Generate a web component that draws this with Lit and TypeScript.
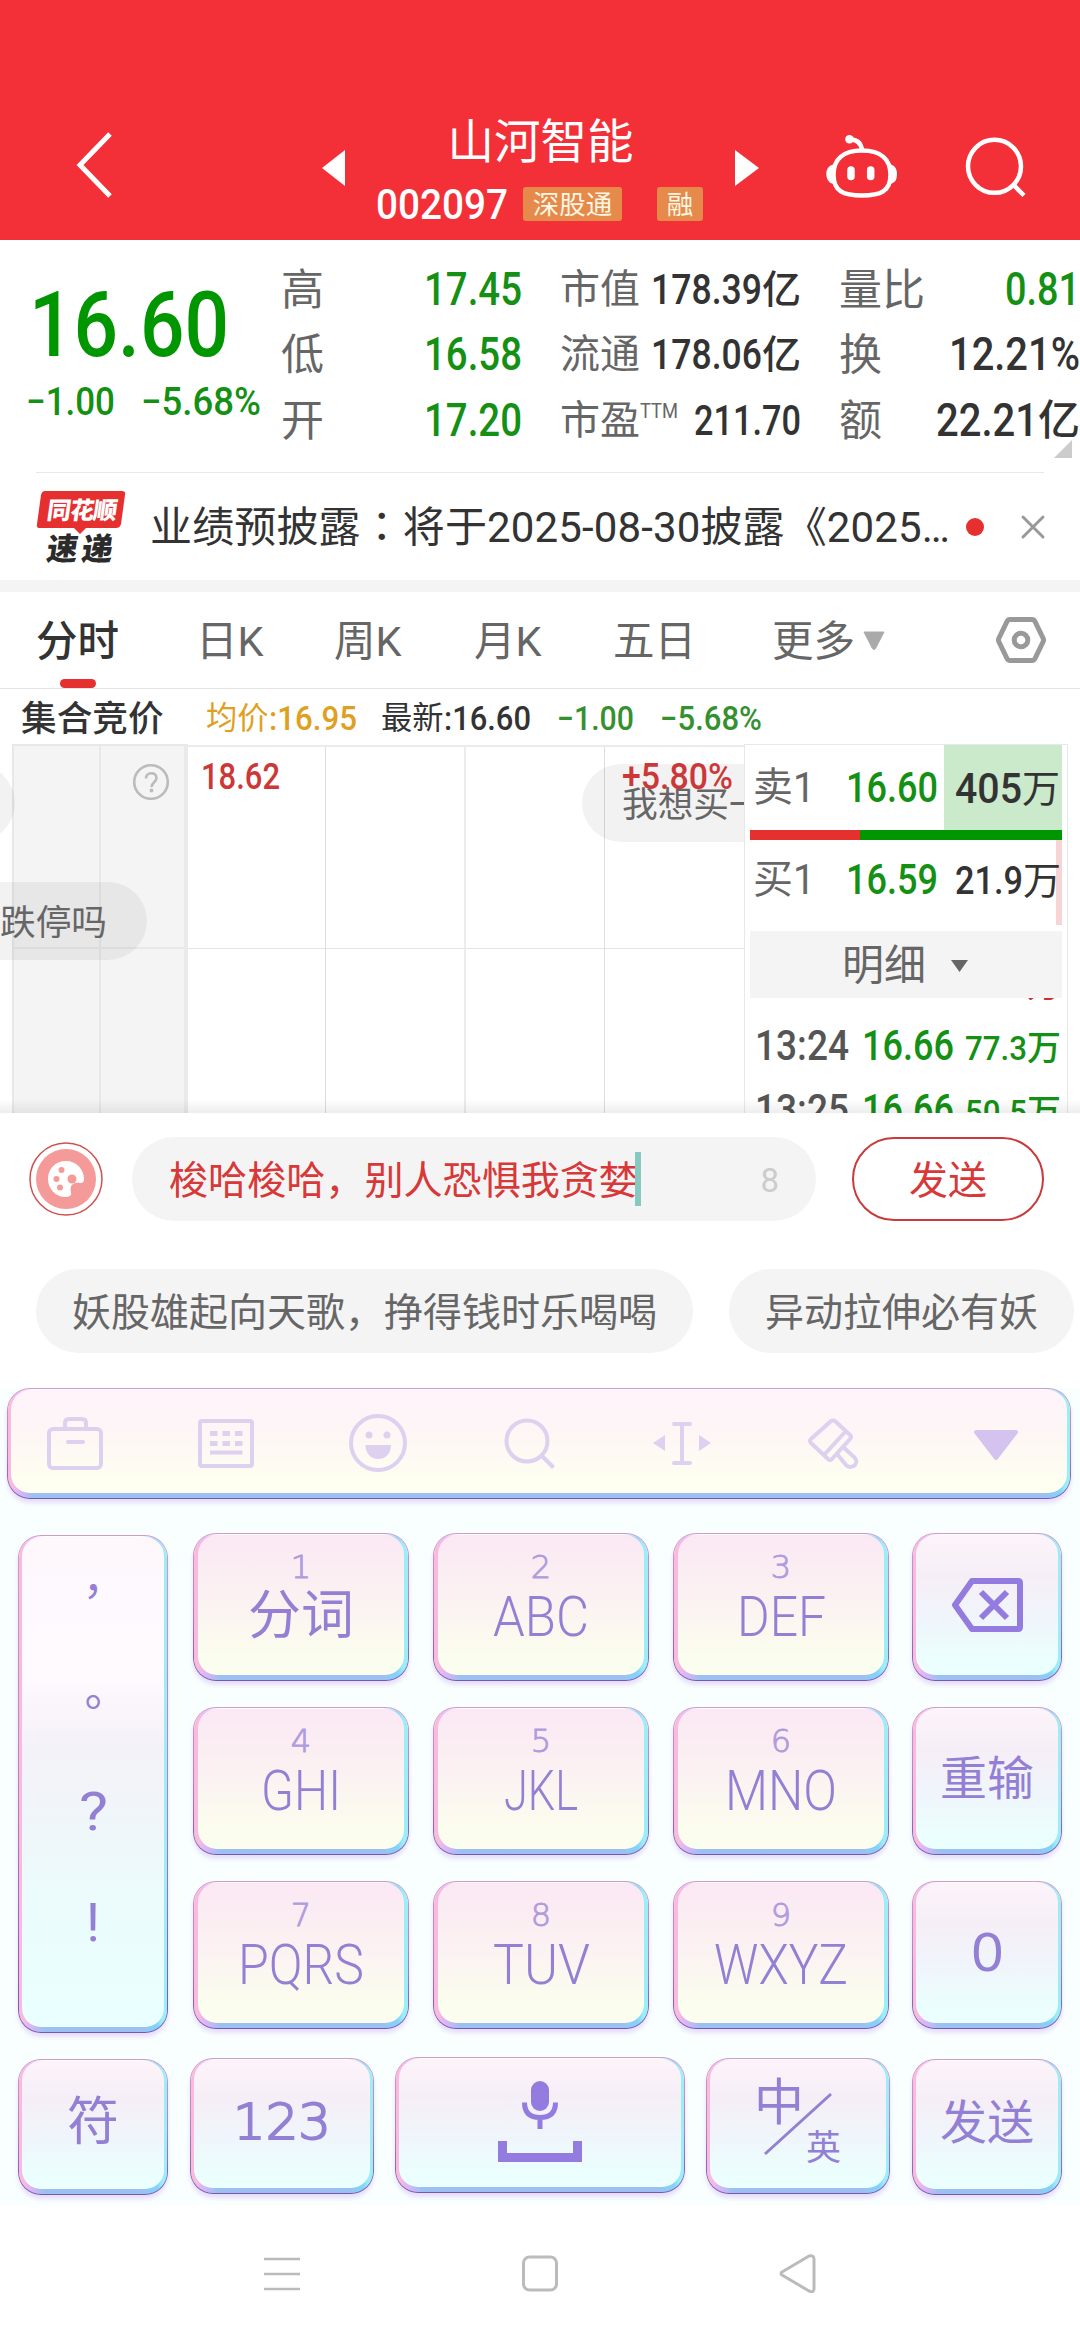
import { LitElement, html, css, nothing } from "lit";
import { customElement, property } from "lit/decorators.js";

/** One line of text set to an exact advance width, condensed or widened as needed. */
@customElement("fit-text")
export class FitText extends LitElement {
  static styles = css`
    :host { display: inline-block; white-space: nowrap; flex: none; }
    .line { display: inline-block; transform-origin: 0 50%; }
  `;
  @property() text = "";
  @property({ type: Number }) w = 0;
  render() {
    return html`<span class="line">${this.text}</span>`;
  }
  updated() {
    const line = this.renderRoot.querySelector(".line") as HTMLElement;
    line.style.transform = "none";
    const natural = line.getBoundingClientRect().width || this.w;
    this.style.width = `${this.w}px`;
    line.style.marginRight = `${this.w - natural}px`;
    line.style.transform = `scaleX(${this.w / natural})`;
  }
}

const fit = (text: string, w: number, cls = "") =>
  html`<fit-text class="num ${cls}" .text=${text} .w=${w}></fit-text>`;

@customElement("quote-header")
export class QuoteHeader extends LitElement {
  static styles = css`
    :host { display: block; height: 240px; background: #f33038; color: #fff; }
    .bar { display: flex; height: 240px; box-sizing: border-box; padding-top: 110px; }
    .back { width: 322px; height: 130px; flex: none; }
    .arrow { width: 24px; height: 36px; margin-top: 40px; flex: none; }
    .mid { width: 389px; flex: none; display: flex; flex-direction: column; align-items: center; }
    .name { font-size: 46.5px; line-height: 64px; height: 74px; }
    .sub { display: flex; align-items: center; height: 40px; align-self: flex-start; padding-left: 30px; }
    .code { font-size: 42px; line-height: 42px; font-weight: 500; padding-top: 2px; }
    .tag { background: #e58a4b; color: #fff6e2; height: 34px; line-height: 36px; font-size: 26.5px; width: 99px; text-align: center; border-radius: 3px; margin-left: 15px; }
    .one { width: 46px; margin-left: 35px; }
    .icon { height: 130px; flex: none; }
  `;
  render() {
    return html`<div class="bar">
      <svg class="back" viewBox="0 0 322 130"><path d="M110 24 80 55l30 31" fill="none" stroke="#fff" stroke-width="5"/></svg>
      <svg class="arrow" viewBox="0 0 24 36"><path d="M23 0v36L0 18z" fill="#fff"/></svg>
      <div class="mid">
        <div class="name">山河智能</div>
        <div class="sub">${fit("002097", 132, "code")}<span class="tag">深股通</span><span class="tag one">融</span></div>
      </div>
      <svg class="arrow" viewBox="0 0 24 36"><path d="M0 0v36l24-18z" fill="#fff"/></svg>
      <svg class="icon" width="321" viewBox="759 110 321 130" fill="none" stroke="#fff" stroke-width="4.500">
        <path d="M850 139.500c6 0 11 3 12 10.500"/>
        <circle cx="849.500" cy="139.300" r="4.300" fill="#fff" stroke="none"/>
        <path d="M862 150.500c-19 0-28.500 9-28.500 24 0 17 10 21 28.500 21s28.500-4 28.500-21c0-15-9.500-24-28.500-24z"/>
        <path d="M833 165.500c-8 1-8 16 0 17.500zM891 165.500c7 1 7 16 0 17.500z" fill="#fff" stroke="#fff" stroke-width="1.500"/>
        <path d="M851 170v6.500M870.700 170v6.500" stroke-width="7.500" stroke-linecap="round"/>
        <circle cx="994.500" cy="166.300" r="26.500"/>
        <path d="M1013 184.500l11 11"/>
      </svg>
    </div>`;
  }
}

@customElement("quote-stats")
export class QuoteStats extends LitElement {
  static styles = css`
    :host { display: block; height: 232px; }
    .wrap { display: flex; height: 232px; position: relative; }
    .price { width: 281px; flex: none; color: #009600; box-sizing: border-box; padding: 33px 0 0 29px; }
    .big { font-size: 91px; line-height: 104px; height: 104px; font-weight: 500; display: block; }
    .chg { font-size: 39px; line-height: 48px; font-weight: 500; color: #149014; display: flex; gap: 26px; margin: 1px 0 0 -3px; }
    .col { width: 241px; margin-right: 38px; padding-top: 17px; flex: none; }
    .col:last-of-type { margin-right: 0; }
    .row { height: 65.5px; display: flex; justify-content: space-between; align-items: center; }
    .lab { font-size: 43px; line-height: 50px; color: #666; }
    .col.m .lab { font-size: 40px; display: flex; }
    .tm { font-size: 20px; line-height: 30px; color: #666; }
    .val { display: flex; align-items: center; color: #333; font-weight: 500; line-height: 50px; font-size: 45.5px; }
    .col.m .val { font-size: 42px; }
    .unit { font-size: 42px; line-height: 50px; font-weight: 500; }
    .col.m .unit { font-size: 39px; }
    .val.g { color: #149014; }
    .corner { position: absolute; left: 1054px; top: 200px; width: 18px; height: 18px; }
  `;
  render() {
    const col = (cls: string, rows: [string, string, number, string, string][]) => html`<div class="col ${cls}">
      ${rows.map(([l, v, w, u, c]) => html`<div class="row">
        <span class="lab">${l}${l === "市盈" ? fit("TTM", 38, "tm") : nothing}</span>
        <span class="val ${c}">${fit(v, w)}${u ? html`<span class="unit">${u}</span>` : nothing}</span>
      </div>`)}
    </div>`;
    return html`<div class="wrap">
      <div class="price">${fit("16.60", 200, "big")}<div class="chg">${fit("−1.00", 89)}${fit("−5.68%", 120)}</div></div>
      ${col("", [["高", "17.45", 98, "", "g"], ["低", "16.58", 98, "", "g"], ["开", "17.20", 98, "", "g"]])}
      ${col("m", [["市值", "178.39", 111, "亿", ""], ["流通", "178.06", 111, "亿", ""], ["市盈", "211.70", 107, "", ""]])}
      ${col("", [["量比", "0.81", 75, "", "g"], ["换", "12.21%", 131, "", ""], ["额", "22.21", 102, "亿", ""]])}
      <svg class="corner" viewBox="0 0 18 18"><path d="M18 0v18H0z" fill="#ccc"/></svg>
    </div>`;
  }
}

@customElement("news-strip")
export class NewsStrip extends LitElement {
  static styles = css`
    :host { display: block; height: 108px; }
    .rule { height: 1px; background: #e8e8e8; margin: 0 36px; }
    .row { display: flex; height: 107px; align-items: center; padding-left: 36px; }
    .logo { width: 90px; height: 76px; margin: 0 24px 0 0; flex: none; overflow: visible; }
    .txt { font-size: 42px; line-height: 62px; padding-top: 2px; width: 804px; color: #333; white-space: nowrap; flex: none; letter-spacing: 0.13px; }
    .c { font-family: "Noto Sans CJK TC", sans-serif; line-height: 1; }
    .dot { width: 18px; height: 18px; border-radius: 50%; background: #e63030; margin: 0 36px 0 12px; }
  `;
  render() {
    return html`<div class="rule"></div><div class="row">
      <svg class="logo" viewBox="36 488 90 76">
        <path d="M45 490h77q4 0 3 4l-4 29q-1 4-5 4H86l-6 6-6-6H40q-4 0-3-4l4-29q1-4 4-4z" fill="#e63030"/>
        <g font-family="Noto Sans CJK SC, sans-serif" font-weight="900" transform="skewX(-8)">
          <text x="119" y="518.500" font-size="24" textLength="70" fill="#fff">同花顺</text>
          <text x="124" y="559" font-size="31" textLength="66" fill="#2b2b2b">速递</text>
        </g>
      </svg>
      <div class="txt">业绩预披露<span class="c">：</span>将于2025-08-30披露《2025…</div>
      <span class="dot"></span>
      <svg width="26" height="26" viewBox="0 0 26 26"><path d="M3 3l20 20M23 3 3 23" stroke="#999" stroke-width="3" stroke-linecap="round"/></svg>
    </div>`;
  }
}

@customElement("chart-tabs")
export class ChartTabs extends LitElement {
  static styles = css`
    :host { display: block; border-top: 12px solid #f4f4f4; }
    .tabs { display: flex; height: 96px; align-items: center; border-bottom: 1px solid #e4e4e4; color: #666; font-size: 41.5px; position: relative; line-height: 60px; }
    .tabs > * { flex: none; }
    .tabs > span { padding-top: 4px; }
    .on { color: #333; font-weight: 500; margin-left: 36px; width: 160px; }
    .t1 { width: 138px; }
    .t2 { width: 140px; }
    .t3 { width: 139px; }
    .w { width: 159px; }
    .w2 { width: 86px; }
    .mark { position: absolute; left: 60px; top: 87px; width: 36px; height: 9px; border-radius: 5px; background: #e63030; }
    .tri { margin: 0 111px 0 5px; }
    .info { display: flex; align-items: center; height: 55px; font-size: 31.3px; padding-left: 21px; color: #333; line-height: 42px; padding-top: 4px; box-sizing: border-box; }
    .auc { font-size: 35.7px; width: 185px; font-weight: 500; }
    .avg { color: #dfa022; width: 175px; display: flex; align-items: center; }
    .new { width: 176px; display: flex; align-items: center; }
    .num { font-size: 33px; line-height: 42px; font-weight: 500; }
    .g { color: #359030; margin-right: 26px; }
  `;
  render() {
    return html`<div class="tabs">
      <span class="on">分时</span><span class="t1">日K</span><span class="t2">周K</span><span class="t3">月K</span><span class="w">五日</span><span class="w2">更多</span>
      <svg class="tri" width="22" height="19" viewBox="0 0 22 19"><path d="M1 1h20L12.500 17.500q-1.500 2-3 0z" fill="#aaa" stroke="#aaa" stroke-linejoin="round"/></svg>
      <svg width="50" height="48" viewBox="0 0 50 48" fill="none" stroke="#999"><path d="M14 3.500h22q2 0 3 2l8 16.500q1 2 0 4l-8 16.500q-1 2-3 2H14q-2 0-3-2L3 26q-1-2 0-4l8-16.500q1-2 3-2z" stroke-width="5"/><circle cx="25" cy="24" r="6.800" stroke-width="5"/></svg>
      <div class="mark"></div>
    </div>
    <div class="info">
      <span class="auc">集合竞价</span>
      <span class="avg">均价${fit(":16.95", 88)}</span>
      <span class="new">最新${fit(":16.60", 87)}</span>
      ${fit("−1.00", 77, "g")}${fit("−5.68%", 102, "g")}
    </div>`;
  }
}

@customElement("quote-chart")
export class QuoteChart extends LitElement {
  static styles = css`
    :host { display: block; height: 369px; overflow: hidden; position: relative; }
    .wrap { display: flex; height: 369px; padding-left: 12px; }
    .auction { width: 176px; box-sizing: border-box; background: #f4f4f4; border: 2px solid #e8e8e8; border-right: 4px solid #eaeaea; border-bottom: 0; display: grid; grid-template-columns: 87px 1fr; grid-template-rows: 203px 1fr; flex: none; }
    .auction i:nth-child(odd) { border-right: 2px solid #e8e8e8; }
    .auction i:nth-child(-n + 2) { border-bottom: 2px solid #e8e8e8; }
    .main { width: 556px; box-sizing: border-box; margin-top: 1px; border-top: 2px solid #ebebeb; display: grid; grid-template-columns: 138px 140px 139px 1fr; grid-template-rows: 202px 1fr; flex: none; }
    .main i { border-right: 1px solid #ddd; }
    .main i:nth-child(4n) { border-right: 0; }
    .main i:nth-child(4n + 2) { border-right: 2px solid #ececec; }
    .main i:nth-child(-n + 4) { border-bottom: 1px solid #e4e4e4; }
    .tag { position: absolute; top: 11px; font-size: 36px; line-height: 44px; font-weight: 500; color: #cc3838; }
    .hi { left: 201px; }
    .pc { left: 622px; }
    .help { position: absolute; left: 132px; top: 19px; }
    .bub { position: absolute; height: 78px; line-height: 82px; border-radius: 39px; background: rgba(0, 0, 0, 0.05); color: #666; font-size: 35.7px; white-space: nowrap; box-sizing: border-box; }
    .b1 { left: 582px; top: 20px; width: 260px; padding-left: 40px; }
    .b2 { left: -153px; top: 138px; width: 300px; padding-left: 153px; }
    .b3 { left: -185px; top: 20px; width: 200px; }
    .panel { position: relative; z-index: 1; width: 324px; box-sizing: border-box; background: #fff; border: 1px solid #e8e8e8; border-bottom: 0; padding: 0 5px; flex: none; display: flex; flex-direction: column; }
    .q { height: 85px; display: grid; grid-template-columns: 96px 98px 118px; align-items: center; flex: none; color: #333; font-weight: 500; line-height: 50px; font-size: 42px; }
    .q .lab { color: #666; font-weight: 400; font-size: 40px; padding-left: 3px; display: flex; }
    .lab .num { font-size: 42px; }
    .g { color: #149014; }
    .bid .lab, .bid > .g { padding-bottom: 5px; }
    .vol { display: flex; align-items: center; height: 85px; justify-content: flex-end; box-sizing: border-box; padding: 2px 2px 0 0; }
    .sell { background: #cbe9cb; }
    .buy { border-right: 6px solid #f8d5d5; padding: 0 0 3px; }
    .buy .u { margin-right: -5px; }
    .buy .num { font-size: 38px; }
    .u { font-size: 38px; font-weight: 400; }
    .ratio { display: flex; height: 10px; background: #009600; flex: none; }
    .red { width: 110px; background: #e63030; }
    .more { margin-top: 6px; height: 67px; box-sizing: border-box; padding: 3px 0 0 92px; background: #f4f4f4; color: #666; font-size: 42px; line-height: 60px; display: flex; align-items: center; gap: 25px; flex: none; }
    .list { flex: 1; min-height: 0; overflow: hidden; }
    .ticks { margin-top: -47px; }
    .tick { height: 63.5px; display: flex; align-items: center; line-height: 50px; padding-left: 5px; font-size: 42px; font-weight: 500; color: #149014; }
    .time { color: #555; margin-right: 13px; }
    .amt { font-size: 34px; width: 106px; display: flex; justify-content: flex-end; align-items: center; padding-top: 4px; margin-left: 1px; }
    .amt .u { font-size: 34px; font-weight: 500; }
    .up { color: #c83030; }
    .fade { position: absolute; left: 0; right: 0; bottom: 0; height: 14px; z-index: 2; background: linear-gradient(rgba(0, 0, 0, 0), rgba(0, 0, 0, 0.07)); }
  `;
  render() {
    const cells = (n: number) => Array.from({ length: n }, () => html`<i></i>`);
    const tick = (t: string, p: string, a: string, c = "") => html`<div class="tick">
      ${fit(t, 94, "time")}${fit(p, 92)}<span class="amt ${c}">${fit(a, 62)}<span class="u">万</span></span></div>`;
    return html`<div class="wrap">
      <div class="auction">${cells(4)}</div>
      <div class="main">${cells(8)}</div>
      <div class="panel">
        <div class="q"><span class="lab">卖${fit("1", 22)}</span>${fit("16.60", 92, "g")}<span class="vol sell">${fit("405", 67)}<span class="u">万</span></span></div>
        <div class="ratio"><div class="red"></div></div>
        <div class="q bid"><span class="lab">买${fit("1", 22)}</span>${fit("16.59", 92, "g")}<span class="vol buy">${fit("21.9", 68)}<span class="u">万</span></span></div>
        <div class="more">明细<svg width="17" height="12" viewBox="0 0 17 12"><path d="M0 0h17L8.500 12z" fill="#666"/></svg></div>
        <div class="list"><div class="ticks">
          ${tick("13:23", "16.66", "10.4", "up")}${tick("13:24", "16.66", "77.3")}${tick("13:25", "16.66", "50.5")}
        </div></div>
      </div>
    </div>
    <div class="bub b1">我想买一</div>
    <div class="bub b2">跌停吗</div>
    <div class="bub b3"></div>
    ${fit("18.62", 79, "tag hi")}${fit("+5.80%", 111, "tag pc")}
    <svg class="help" width="38" height="38" viewBox="0 0 38 38"><circle cx="19" cy="19" r="16.800" fill="none" stroke="#bbb" stroke-width="2.600"/><path d="M14 15.500c0-7 10.500-7 10.500-.5 0 4-5 4.500-5 9" fill="none" stroke="#bbb" stroke-width="2.600"/><circle cx="19.500" cy="27.500" r="1.900" fill="#bbb"/></svg>
    <div class="fade"></div>`;
  }
}

@customElement("chat-bar")
export class ChatBar extends LitElement {
  static styles = css`
    :host { display: block; height: 275px; background: #fff; overflow: hidden; }
    .row { display: flex; align-items: center; padding: 24px 0 0 28px; height: 84px; }
    .pal { width: 76px; height: 76px; flex: none; margin-right: 28px; }
    .input { width: 684px; height: 84px; border-radius: 42px; background: #f4f4f4; box-sizing: border-box; padding: 0 37px 0 37px; display: flex; align-items: center; color: #d83838; font-size: 39.1px; line-height: 60px; flex: none; }
    .text { width: 466px; white-space: nowrap; padding-top: 4px; }
    .caret { width: 6px; height: 54px; background: #86c9c0; }
    .left { margin-left: auto; color: #ccc; font-size: 33px; padding-top: 3px; }
    .send { margin-left: 36px; width: 192px; height: 84px; box-sizing: border-box; border: 2px solid #c93a3a; border-radius: 42px; color: #d83838; font-size: 39px; line-height: 84px; text-align: center; }
    .chips { display: flex; gap: 36px; padding: 48px 0 0 36px; }
    .chip { height: 84px; line-height: 88px; border-radius: 42px; background: #f4f4f4; color: #666; font-size: 39px; padding: 0 36px; white-space: nowrap; flex: none; }
  `;
  render() {
    return html`<div class="row">
      <svg class="pal" viewBox="28 1141 76 76"><circle cx="66" cy="1179" r="36" fill="none" stroke="#d05050" stroke-width="1.500"/><circle cx="66" cy="1179" r="30" fill="#f49a98"/>
        <path d="M66 1161c-11 0-18 8-18 18s8 18 17 18c4 0 7-1 6-5-2-8 4-10 9-9 3 0 4-1 4-4 0-10-8-18-18-18z" fill="#fff"/>
        <g fill="#f49a98"><circle cx="61.500" cy="1170" r="3"/><circle cx="56.500" cy="1179" r="3"/><circle cx="72" cy="1179" r="4.500"/><circle cx="60" cy="1187.500" r="3"/></g></svg>
      <div class="input"><span class="text">梭哈梭哈，别人恐惧我贪婪</span><span class="caret"></span><span class="left">8</span></div>
      <div class="send">发送</div>
    </div>
    <div class="chips"><div class="chip">妖股雄起向天歌，挣得钱时乐喝喝</div><div class="chip">异动拉伸必有妖</div></div>`;
  }
}

@customElement("key-board")
export class KeyBoard extends LitElement {
  static styles = css`
    :host { display: block; height: 817px; background: #f9fffe; color: #9380d4; }
    .key, .tools {
      box-sizing: border-box; border: 1px solid transparent; border-radius: 23px; padding: 1px 3px 5px; display: flex; flex: none;
      background:
        linear-gradient(90deg, #f9bade 0 5px, rgba(236, 178, 246, 0.9) 10px, rgba(200, 190, 248, 0) 26px) padding-box,
        linear-gradient(270deg, #9ceef6 0 5px, rgba(126, 214, 250, 0.9) 10px, rgba(150, 200, 248, 0) 26px) padding-box,
        linear-gradient(#fff, #fff 60%, #9cc0f2 calc(100% - 8px)) padding-box,
        linear-gradient(#d09cc8, #b183c4 50%, #7559b0) border-box;
      box-shadow: 0 4px 4px rgba(205, 170, 245, 0.4);
    }
    .top { padding: 1px 4px 5px; }
    .face { flex: 1; border-radius: 19px; display: flex; flex-direction: column; align-items: center; background: linear-gradient(#fdf4fa, #f6eef7 30%, #eff6fb 62%, #ebfffe 92%); }
    .top .face { background: linear-gradient(#fbe8f3, #fbf2f2 48%, #fbfdee 85%); }
    .tools { margin: 0 9px 0 7px; height: 111px; }
    .tools .face { background: linear-gradient(#fff4fb, #fdf5f6 35%, #fefff0 95%); display: block; }
    .pad { display: grid; grid-template-columns: 150px 216px 216px 216px 150px; column-gap: 24px; padding: 34px 0 0 18px; grid-template-rows: repeat(3, 148px); row-gap: 26px; }
    .pad > .side { grid-row: 1 / 4; grid-column: 1; margin-top: 2px; height: 498px; width: 150px; }
    .pad > .mid { width: 216px; margin-left: 1px; }
    .side .face { background: linear-gradient(#fef8fd, #fefafe 28%, #f4f1f8 42%, #ecfafb 70%, #eaffff 95%); }
    .p { height: 110.5px; line-height: 108px; font-size: 53px; }
    .p.f { font-family: "Noto Sans CJK TC", sans-serif; font-size: 44px; line-height: 104px; }
    .d { font-family: "DejaVu Sans", sans-serif; font-weight: 200; -webkit-text-stroke: 0.9px #b09bdf; font-size: 32px; line-height: 34px; margin-top: 15px; color: #b09bdf; }
    .l { font-weight: 300; font-size: 56px; line-height: 56px; margin-top: 5px; }
    .l.cj { font-size: 53px; font-weight: 400; margin-top: 4px; }
    .one { justify-content: center; font-size: 47px; line-height: 60px; }
    .one .num { font-family: "DejaVu Sans", sans-serif; font-weight: 200; -webkit-text-stroke: 2px #9380d4; font-size: 50px; }
    .bottom { display: flex; padding: 30px 0 0 18px; align-items: flex-start; }
    .bottom .key { height: 136px; }
    .k1 { width: 150px; margin-right: 22px; }
    .k2 { width: 184px; margin-right: 21px; margin-top: -1px; }
    .k3 { width: 290px; margin-right: 21px; margin-top: -2px; }
    .k4 { width: 184px; margin-right: 22px; margin-top: -1px; }
    .k1 .one { font-size: 52px; }
    .k5 { width: 150px; }
    .k1 .one, .k2 .one, .k5 .one { box-sizing: border-box; padding-bottom: 4px; }
    .lang { position: relative; }
    .zh { position: absolute; left: 44px; top: 17px; font-size: 50px; line-height: 52px; }
    .en { position: absolute; left: 96px; top: 69px; font-size: 35px; line-height: 40px; }
  `;
  render() {
    const key = (d: string, l: string, w: number) => html`<div class="key top mid"><div class="face">
      <span class="d">${d}</span>${l === "分词" ? html`<span class="l cj">${l}</span>` : fit(l, w, "l")}</div></div>`;
    return html`
      <div class="tools"><div class="face">
        <svg width="1056" height="102" viewBox="11 1390 1056 102" fill="none" stroke="#ddd1ef" stroke-width="4">
          <rect x="49" y="1429" width="52" height="39" rx="4"/><path d="M65 1429v-6q0-4 4-4h13q4 0 4 4v6M68 1442h15" stroke-linecap="round"/>
          <rect x="200" y="1421" width="52" height="45" rx="2"/><path d="M210 1433.500h33M210 1443.500h33" stroke-width="5" stroke-dasharray="7.500 5"/><path d="M210 1452.500h32.500"/>
          <circle cx="378" cy="1443" r="27"/><g fill="#ddd1ef" stroke="none"><circle cx="369" cy="1435" r="3.500"/><circle cx="387" cy="1435" r="3.500"/><path d="M365.500 1445h25.500c0 8-5 14-12.700 14s-12.800-6-12.800-14z"/></g>
          <circle cx="527" cy="1441" r="20.500"/><path d="M541.500 1455.500l12 12"/>
          <path d="M674 1424h16M674 1463h16M682 1424v39" stroke-linecap="round"/><path d="M653 1443l12-8v16zM711 1443l-12-8v16z" fill="#ddd1ef" stroke="none"/>
          <g transform="translate(833 1440)" stroke-linejoin="round"><path d="M-22 3 Q-24 1-22-1L-2-19Q0-20 2-19L17-5Q19-3 17-1L-1 19Q-3 21-5 19ZM-9 15 12-8M4 14l9 11c3 3 7 2 9 0 2-3 2-5-1-8L9 6"/></g>
          <path d="M976 1432h40l-20 26z" fill="#d3c3ee" stroke="#d3c3ee" stroke-linejoin="round"/>
        </svg>
      </div></div>
      <div class="pad">
        <div class="key side"><div class="face"><span class="p f">，</span><span class="p f">。</span>${fit("?", 29, "p")}${fit("!", 14, "p")}</div></div>
        ${key("1", "分词", 104)}${key("2", "ABC", 96)}${key("3", "DEF", 89)}
        <div class="key end"><div class="face one"><svg width="74" height="56" viewBox="0 0 74 56" fill="none" stroke="#937be0" stroke-width="6"><path d="M22 4h46q2 0 2 2v44q0 2-2 2H22L5 28z" stroke-linejoin="round"/><path d="M31 15l26 26M57 15 31 41"/></svg></div></div>
        ${key("4", "GHI", 80)}${key("5", "JKL", 74)}${key("6", "MNO", 112)}
        <div class="key end"><div class="face one">重输</div></div>
        ${key("7", "PQRS", 126)}${key("8", "TUV", 97)}${key("9", "WXYZ", 134)}
        <div class="key end"><div class="face one">${fit("0", 35)}</div></div>
      </div>
      <div class="bottom">
        <div class="key k1"><div class="face one">符</div></div>
        <div class="key k2"><div class="face one">${fit("123", 98)}</div></div>
        <div class="key k3"><div class="face one"><svg width="86" height="84" viewBox="0 0 86 84"><rect x="34" y="0" width="18" height="30" rx="9" fill="#937be0"/><path d="M27.500 21.500q0 15 15.500 15t15.500-15M43 37v11" fill="none" stroke="#937be0" stroke-width="5"/><path d="M1 60h9v12h66V60h9v21H1z" fill="#937be0"/></svg></div></div>
        <div class="key k4"><div class="face one lang"><span class="zh">中</span><svg width="70" height="64" viewBox="0 0 70 64"><path d="M2 62 68 2" stroke="#9380d4" stroke-width="3"/></svg><span class="en">英</span></div></div>
        <div class="key k5"><div class="face one">发送</div></div>
      </div>`;
  }
}

@customElement("app-root")
export class AppRoot extends LitElement {
  static styles = css`
    :host { display: block; width: 1080px; height: 2340px; overflow: hidden; background: #fff; font-family: Roboto, "Noto Sans CJK SC", sans-serif; }
    .nav { height: 135px; display: flex; justify-content: center; gap: 218px; align-items: center; }
  `;
  render() {
    return html`<quote-header></quote-header><quote-stats></quote-stats><news-strip></news-strip><chart-tabs></chart-tabs>
      <quote-chart></quote-chart><chat-bar></chat-bar><key-board></key-board>
      <div class="nav">
        <svg width="40" height="40" viewBox="0 0 40 40" stroke="#bbb" stroke-width="2.500"><path d="M2 6h36M2 21h36M2 36h36"/></svg>
        <svg width="40" height="40" viewBox="0 0 40 40" fill="none" stroke="#bbb" stroke-width="3"><rect x="3.500" y="4" width="33" height="33" rx="6"/></svg>
        <svg width="40" height="40" viewBox="0 0 40 40" fill="none" stroke="#bbb" stroke-width="3" stroke-linejoin="round"><path d="M4 19q-2 1.500 0 3L31 38q5 2 5-2V6q0-4-5-3z"/></svg>
      </div>`;
  }
}
